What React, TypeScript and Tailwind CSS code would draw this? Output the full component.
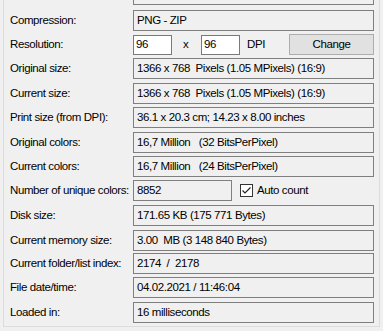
import React from "react";

const font = { fontFamily: '"Liberation Sans", Arial, sans-serif' };

function Row({ label, value, mt }: { label: string; value: string; mt: string }) {
  return (
    <div className={`flex items-center h-[21px] ${mt}`}>
      <div className="w-[129px] pl-[6px] shrink-0 whitespace-nowrap">{label}</div>
      <div className="w-[241px] h-[21px] border border-[#7f7f7f] bg-[#f0f0f0] flex items-center pl-[3px] whitespace-pre overflow-hidden">
        {value}
      </div>
    </div>
  );
}

export default function App() {
  return (
    <div
      className="w-[383px] h-[331px] bg-[#f0f0f0] overflow-hidden text-[11.5px] text-black tracking-[-0.4px] leading-none"
      style={font}
    >
      <div className="ml-[3px] mt-[-30px] w-[377px] h-[357px] border border-[#dcdcdc]">
        <div className="pt-[13px]">
          <div className="flex items-center h-[21px]">
            <div className="w-[129px] pl-[6px] shrink-0"></div>
            <div className="w-[241px] h-[21px] border border-[#7f7f7f] flex items-center pl-[3px] whitespace-pre overflow-hidden">
              Pictures\My Screenshots (copy)\Display (y).png
            </div>
          </div>
          <Row label="Compression:" value="PNG - ZIP" mt="mt-[5px]" />
          <div className="flex items-center h-[21px] mt-[3px]">
            <div className="w-[129px] pl-[6px] shrink-0">Resolution:</div>
            <div className="w-[241px] flex items-center">
              <div className="w-[39px] h-[20px] mt-[1px] border border-[#7a7a7a] bg-white flex items-center pl-[2px]">96</div>
              <div className="ml-[11px] w-[18px]">x</div>
              <div className="w-[39px] h-[20px] mt-[1px] border border-[#7a7a7a] bg-white flex items-center pl-[2px]">96</div>
              <div className="ml-[7px] w-[42px]">DPI</div>
              <div className="w-[85px] h-[21px] border border-[#adadad] bg-[#e1e1e1] flex items-center justify-center">Change</div>
            </div>
          </div>
          <Row label="Original size:" value="1366 x 768  Pixels (1.05 MPixels) (16:9)" mt="mt-[3px]" />
          <Row label="Current size:" value="1366 x 768  Pixels (1.05 MPixels) (16:9)" mt="mt-[4px]" />
          <Row label="Print size (from DPI):" value="36.1 x 20.3 cm; 14.23 x 8.00 inches" mt="mt-[3px]" />
          <Row label="Original colors:" value="16,7 Million   (32 BitsPerPixel)" mt="mt-[4px]" />
          <Row label="Current colors:" value="16,7 Million   (24 BitsPerPixel)" mt="mt-[3px]" />
          <div className="flex items-center h-[21px] mt-[3px]">
            <div className="w-[129px] pl-[6px] shrink-0 whitespace-nowrap">Number of unique colors:</div>
            <div className="w-[99px] h-[21px] border border-[#7f7f7f] flex items-center pl-[3px]">8852</div>
            <div className="ml-[8px] w-[13px] h-[13px] border border-[#333333] bg-white flex items-center justify-center">
              <svg width="11" height="11" viewBox="0 0 11 11">
                <path d="M1.5 5.5 L4 8 L9.5 2.5" fill="none" stroke="#222" strokeWidth="1.2" />
              </svg>
            </div>
            <div className="ml-[4px]">Auto count</div>
          </div>
          <Row label="Disk size:" value="171.65 KB (175 771 Bytes)" mt="mt-[4px]" />
          <Row label="Current memory size:" value="3.00  MB (3 148 840 Bytes)" mt="mt-[4px]" />
          <Row label="Current folder/list index:" value="2174  /  2178" mt="mt-[2px]" />
          <Row label="File date/time:" value="04.02.2021 / 11:46:04" mt="mt-[3px]" />
          <Row label="Loaded in:" value="16 milliseconds" mt="mt-[4px]" />
        </div>
      </div>
    </div>
  );
}
